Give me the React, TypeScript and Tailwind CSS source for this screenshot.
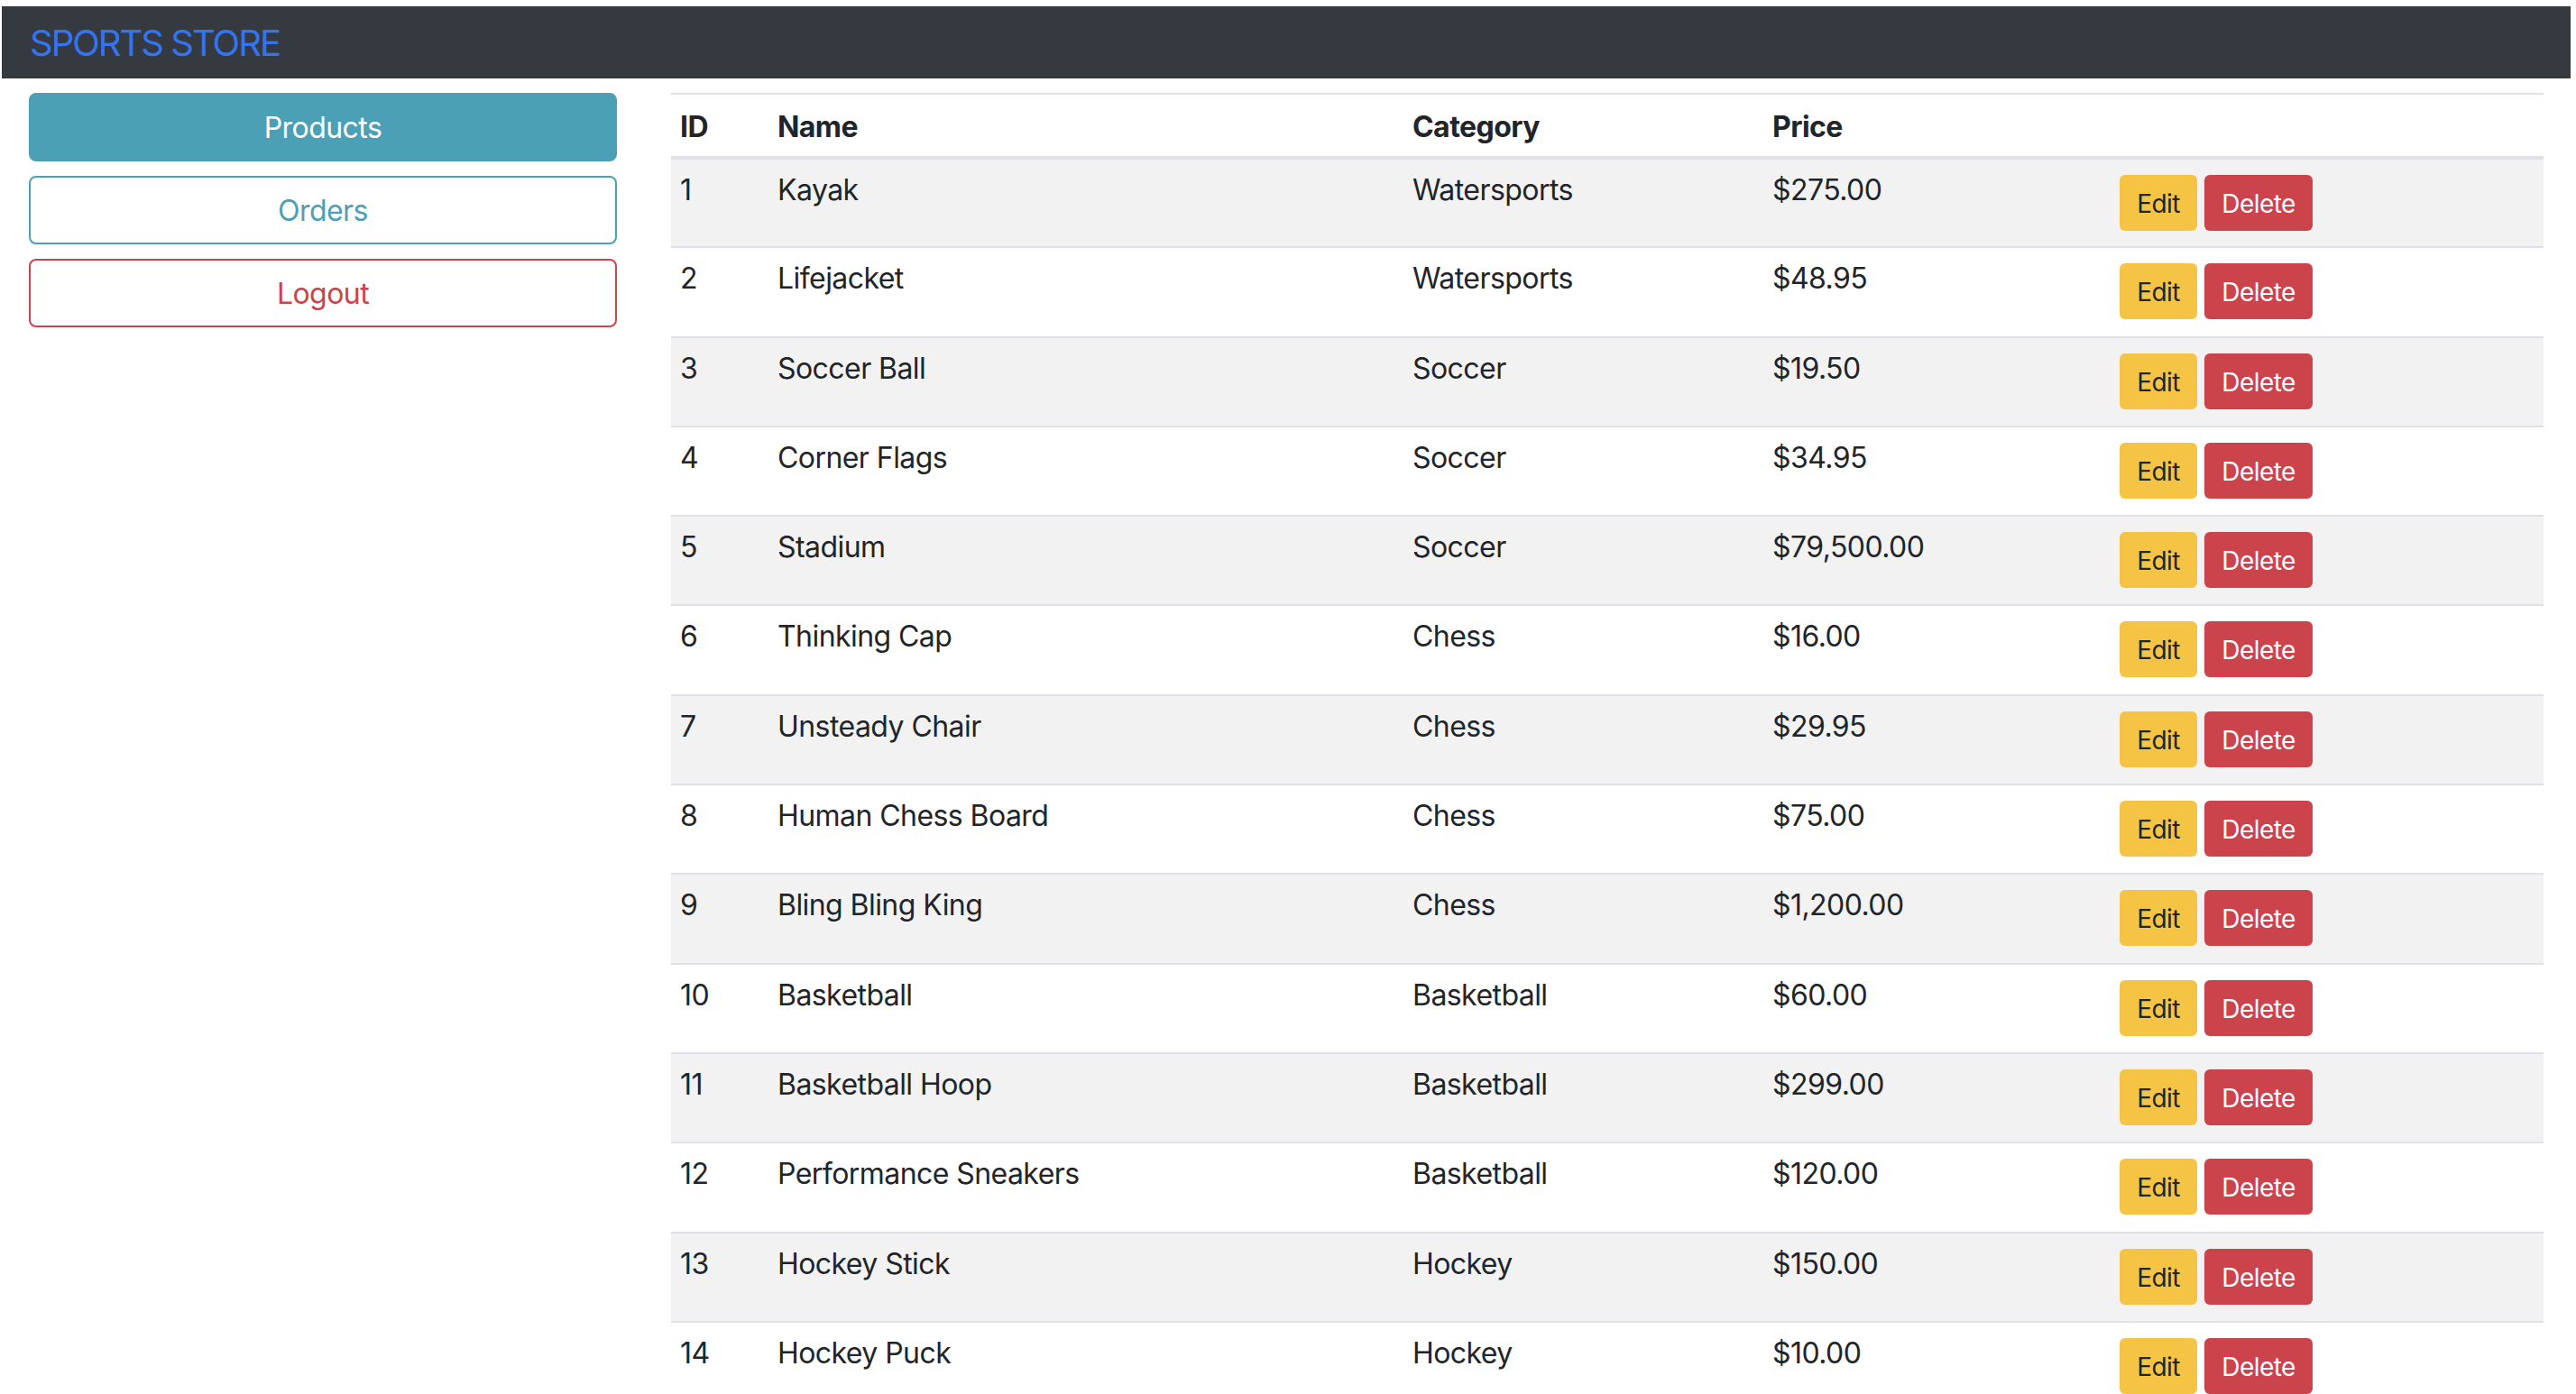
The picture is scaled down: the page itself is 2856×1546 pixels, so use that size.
import React from 'react';

interface Product {
  id: number;
  name: string;
  category: string;
  price: number;
}

const products: Product[] = [
  { id: 1, name: 'Kayak', category: 'Watersports', price: 275 },
  { id: 2, name: 'Lifejacket', category: 'Watersports', price: 48.95 },
  { id: 3, name: 'Soccer Ball', category: 'Soccer', price: 19.5 },
  { id: 4, name: 'Corner Flags', category: 'Soccer', price: 34.95 },
  { id: 5, name: 'Stadium', category: 'Soccer', price: 79500 },
  { id: 6, name: 'Thinking Cap', category: 'Chess', price: 16 },
  { id: 7, name: 'Unsteady Chair', category: 'Chess', price: 29.95 },
  { id: 8, name: 'Human Chess Board', category: 'Chess', price: 75 },
  { id: 9, name: 'Bling Bling King', category: 'Chess', price: 1200 },
  { id: 10, name: 'Basketball', category: 'Basketball', price: 60 },
  { id: 11, name: 'Basketball Hoop', category: 'Basketball', price: 299 },
  { id: 12, name: 'Performance Sneakers', category: 'Basketball', price: 120 },
  { id: 13, name: 'Hockey Stick', category: 'Hockey', price: 150 },
  { id: 14, name: 'Hockey Puck', category: 'Hockey', price: 10 },
];

const formatPrice = (value: number) =>
  '$' +
  value.toLocaleString('en-US', {
    minimumFractionDigits: 2,
    maximumFractionDigits: 2,
  });

const App: React.FC = () => {
  return (
    <div className="min-h-screen bg-white pt-[7px] pl-[2px] pr-[6px] font-['Inter','Liberation_Sans',sans-serif] tracking-[-0.035em] text-[#212529]">
      <div className="h-[80px] bg-[#343a40] flex items-center px-[31px]">
        <span className="text-[40px] leading-none tracking-[-0.05em] text-[#3574f0] pt-[2px]">SPORTS STORE</span>
      </div>

      <div className="flex">
        {/* sidebar */}
        <div className="w-[712px] shrink-0 px-[30px] pt-[16px] flex flex-col gap-[16px]">
          <button
            type="button"
            className="h-[76px] w-full rounded-[8px] bg-[#4ca0b5] border-2 border-[#4ca0b5] text-white text-[32px] pt-[2px]"
          >
            Products
          </button>
          <button
            type="button"
            className="h-[76px] w-full rounded-[8px] bg-white border-2 border-[#4ca0b5] text-[#4ca0b5] text-[32px] pt-[2px]"
          >
            Orders
          </button>
          <button
            type="button"
            className="h-[76px] w-full rounded-[8px] bg-white border-2 border-[#cb444b] text-[#cb444b] text-[32px] pt-[2px]"
          >
            Logout
          </button>
        </div>

        {/* products table */}
        <div className="flex-1 px-[30px] pt-[16px]">
          <table className="w-full table-fixed border-collapse text-[32px] leading-[48px] text-left">
            <thead>
              <tr className="h-[71px] border-t-2 border-b-4 border-[#dee2e6]">
                <th className="w-[108px] px-[10px] pt-[4px] align-middle font-bold">ID</th>
                <th className="w-[704px] px-[10px] pt-[4px] align-middle font-bold">Name</th>
                <th className="w-[399px] px-[10px] pt-[4px] align-middle font-bold">Category</th>
                <th className="w-[385px] px-[10px] pt-[4px] align-middle font-bold">Price</th>
                <th className="px-[10px]"></th>
              </tr>
            </thead>
            <tbody>
              {products.map((p, index) => (
                <tr
                  key={p.id}
                  className={`h-[99.3px] border-t-2 border-[#dee2e6] first:border-t-0 ${
                    index % 2 === 0 ? 'bg-[#f2f2f2]' : 'bg-white'
                  }`}
                >
                  <td className="px-[10px] pt-[10px] align-top">{p.id}</td>
                  <td className="px-[10px] pt-[10px] align-top">{p.name}</td>
                  <td className="px-[10px] pt-[10px] align-top">{p.category}</td>
                  <td className="px-[10px] pt-[10px] align-top">{formatPrice(p.price)}</td>
                  <td className="px-[10px] pt-[17px] align-top">
                    <div className="flex gap-[8px]">
                      <button
                        type="button"
                        className="h-[62px] w-[86px] rounded-[6px] bg-[#f6c445] text-[#212529] text-[28px] leading-none pt-[2px]"
                      >
                        Edit
                      </button>
                      <button
                        type="button"
                        className="h-[62px] w-[120px] rounded-[6px] bg-[#cb444b] text-white text-[28px] leading-none pt-[2px]"
                      >
                        Delete
                      </button>
                    </div>
                  </td>
                </tr>
              ))}
            </tbody>
          </table>
        </div>
      </div>
    </div>
  );
};

export default App;
